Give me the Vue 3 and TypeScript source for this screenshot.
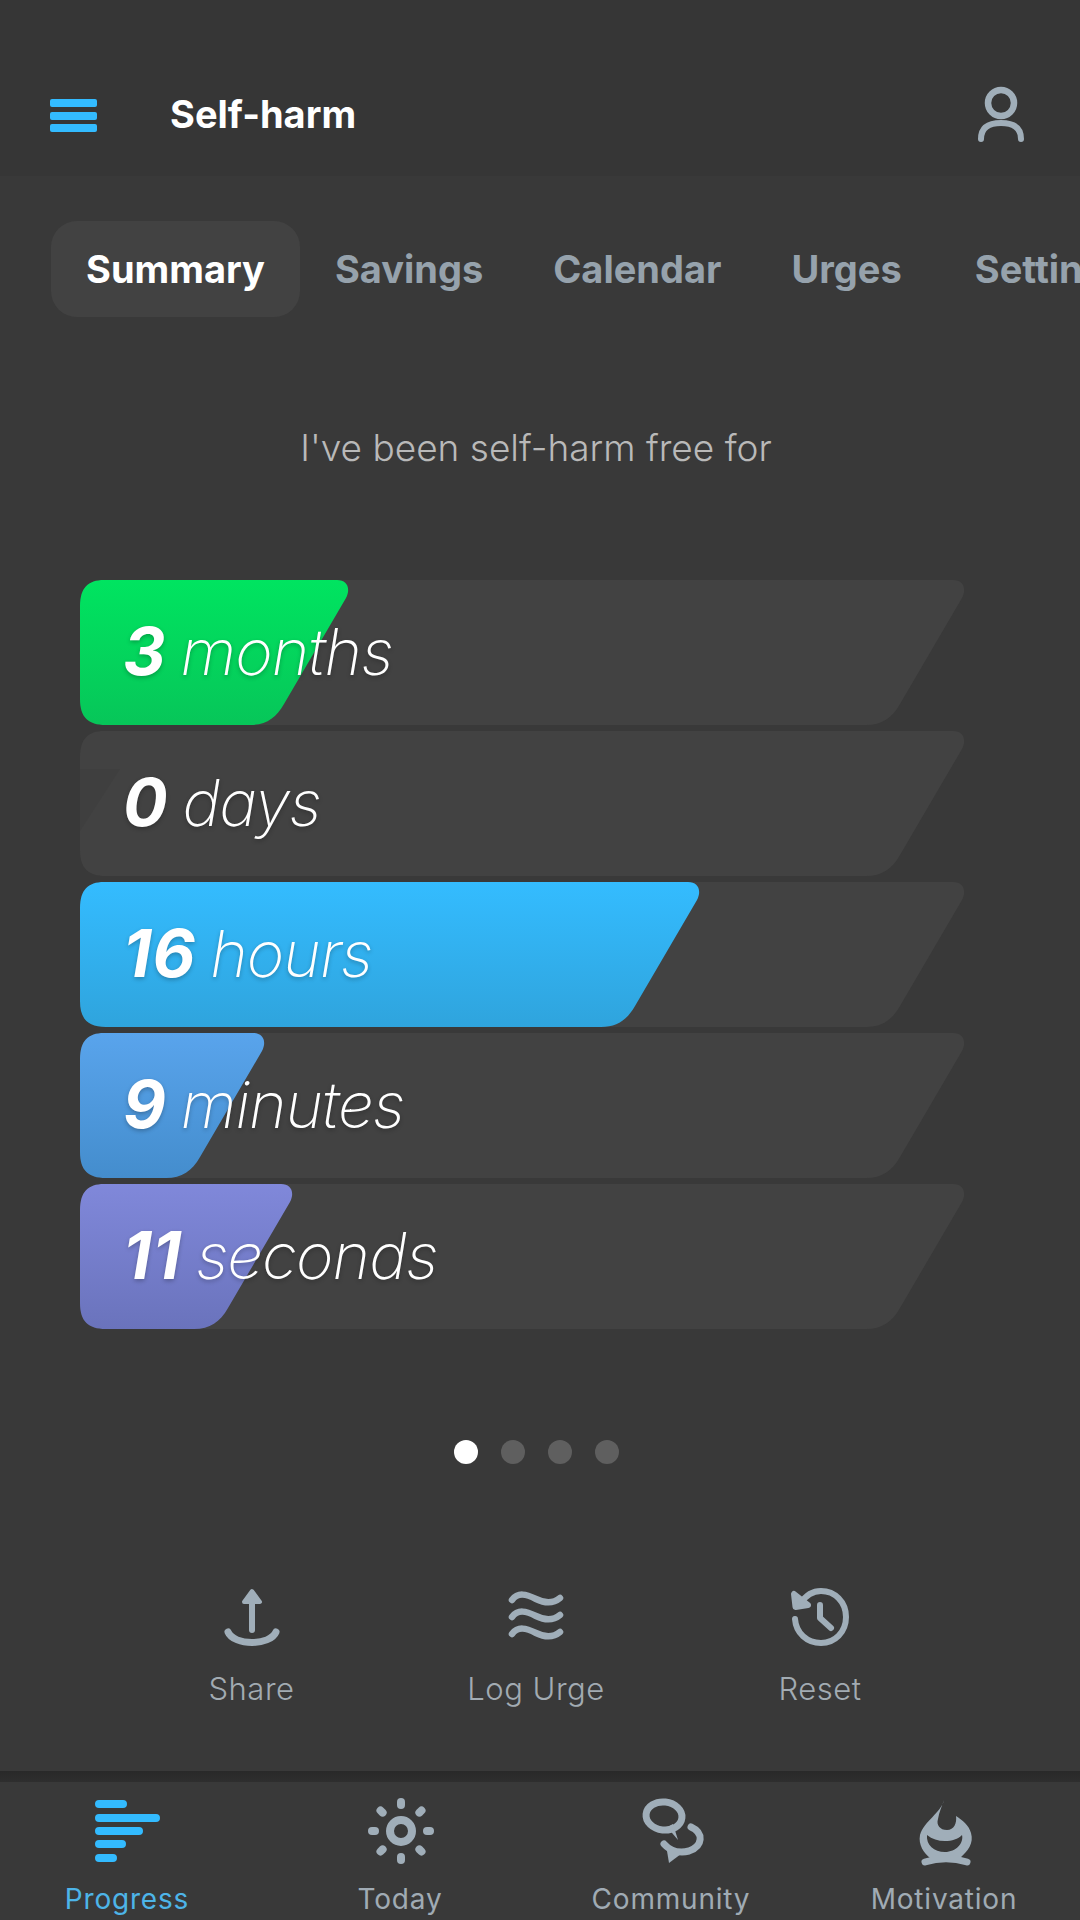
<script setup lang="ts">
type Bar = {
  value: string
  unit: string
  tip: number
  from: string
  to: string
}

const TRACK_TIP = 884

const bars: Bar[] = [
  { value: '3', unit: 'months', tip: 268, from: '#00e460', to: '#07c659' },
  { value: '0', unit: 'days', tip: 0, from: '#424242', to: '#424242' },
  { value: '16', unit: 'hours', tip: 619, from: '#34bcff', to: '#2fa4dd' },
  { value: '9', unit: 'minutes', tip: 184, from: '#59a4ec', to: '#448dcd' },
  { value: '11', unit: 'seconds', tip: 212, from: '#8088da', to: '#6a73bc' }
]

const tabs = ['Summary', 'Savings', 'Calendar', 'Urges', 'Settings']

const slantPath = (w: number) =>
  `M24 0H${w - 11}C${w - 1} 0 ${w + 3} 8 ${w - 2} 18L${w - 64} 124C${w - 72} 138 ${w - 82} 145 ${w - 98} 145H26C8 145 0 137 0 119V26C0 8 8 0 24 0Z`

const sunRays = Array.from({ length: 8 }, (_, i) => i * 45)
</script>

<template>
  <div class="screen">
    <header class="topbar">
      <div class="burger"><span></span><span></span><span></span></div>
      <h1>Self-harm</h1>
      <svg class="user" width="52" height="60" viewBox="0 0 52 60" fill="none" stroke="#a0aeb9">
        <circle cx="26" cy="19" r="13" stroke-width="6.500" />
        <path d="M6 55C6 44 13 39 26 39C39 39 46 44 46 55" stroke-width="6" stroke-linecap="round" />
      </svg>
    </header>

    <nav class="tabs">
      <span v-for="(tab, i) in tabs" :key="tab" class="tab" :class="{ on: i === 0 }">{{ tab }}</span>
    </nav>

    <p class="lead">I've been self-harm free for</p>

    <section class="bars">
      <div v-for="bar in bars" :key="bar.unit" class="bar">
        <svg class="bar-bg" width="890" height="145" viewBox="0 0 890 145">
          <defs>
            <linearGradient :id="`g-${bar.unit}`" x1="0" y1="0" x2="0" y2="1">
              <stop offset="0" :stop-color="bar.from" />
              <stop offset="1" :stop-color="bar.to" />
            </linearGradient>
          </defs>
          <path :d="slantPath(TRACK_TIP)" fill="#424242" />
          <path v-if="bar.tip" :d="slantPath(bar.tip)" :fill="`url(#g-${bar.unit})`" />
          <path v-else d="M0 100L40 38H0Z" fill="#3f3f3f" />
        </svg>
        <span class="bar-text"><b>{{ bar.value }}</b> {{ bar.unit }}</span>
      </div>
    </section>

    <div class="dots">
      <i class="on"></i><i></i><i></i><i></i>
    </div>

    <div class="actions">
      <div class="action">
        <svg width="64" height="60" viewBox="0 0 64 60" fill="none" stroke="#a0aeb9" stroke-width="6" stroke-linecap="round" stroke-linejoin="round">
          <path d="M32 42V10" />
          <path d="M24 14L32 3L40 14Z" fill="#a0aeb9" stroke-width="4" />
          <path d="M8 44C14 58 50 58 56 44" stroke-width="7" />
        </svg>
        <span>Share</span>
      </div>
      <div class="action">
        <svg width="64" height="60" viewBox="0 0 64 60" fill="none" stroke="#a0aeb9" stroke-width="6.500" stroke-linecap="round">
          <path d="M8 12C14 4 22 6 32 11C42 16 50 15 56 10" />
          <path d="M8 29C14 21 22 23 32 28C42 33 50 32 56 27" />
          <path d="M8 46C14 38 22 40 32 45C42 50 50 49 56 44" />
        </svg>
        <span>Log Urge</span>
      </div>
      <div class="action">
        <svg width="64" height="60" viewBox="0 0 64 60" fill="none" stroke="#a0aeb9" stroke-width="6" stroke-linecap="round" stroke-linejoin="round">
          <path d="M13 15C18 7 25 3 33 3C47 3 58 14 58 29C58 44 47 55 33 55C19 55 8 45 7 31" />
          <path d="M6 6L7.500 19L20 17Z" fill="#a0aeb9" />
          <path d="M32 17V30L43 40" />
        </svg>
        <span>Reset</span>
      </div>
    </div>

    <div class="bottom-edge"></div>

    <footer class="tabbar">
      <div class="tabbar-item active">
        <svg width="80" height="72" viewBox="0 0 80 72" fill="none" stroke="#33bbff" stroke-width="8" stroke-linecap="round">
          <path d="M12 7H36M12 21H69M12 34H52M12 47H35M12 61H26" />
        </svg>
        <span>Progress</span>
      </div>
      <div class="tabbar-item">
        <svg width="80" height="72" viewBox="0 0 80 72" fill="none" stroke="#a0aeb9">
          <circle cx="41" cy="34" r="11" stroke-width="8" />
          <path
            v-for="deg in sunRays"
            :key="deg"
            d="M41 5V8"
            stroke-width="8"
            stroke-linecap="round"
            :transform="`rotate(${deg} 41 34)`"
          />
        </svg>
        <span>Today</span>
      </div>
      <div class="tabbar-item">
        <svg width="80" height="72" viewBox="0 0 80 72" fill="none" stroke="#a0aeb9">
          <ellipse cx="33" cy="19" rx="18" ry="14" stroke-width="7" transform="rotate(6 33 19)" />
          <path d="M36 30L47 43L42 27Z" fill="#a0aeb9" stroke="none" />
          <path d="M60 30C73 36 72 49 58 54C50 56 40 55 33 47" stroke-width="7" stroke-linecap="round" />
          <path d="M36 54L38 66L54 54Z" fill="#a0aeb9" stroke="none" />
        </svg>
        <span>Community</span>
      </div>
      <div class="tabbar-item">
        <svg width="80" height="72" viewBox="0 0 80 72" fill="none">
          <path
            fill="#a0aeb9"
            fill-rule="evenodd"
            d="M40 3C37 16 20 24 16 38C14 48 20 56 26 61H56C64 54 70 46 67 36C65 28 58 23 52 19C53 26 50 33 43 33C36 33 32 28 34 22C35 15 38 9 40 3ZM23 38C28 42 34 44 41 44C48 44 54 42 58 38C60 46 52 55 41 55C30 55 22 48 23 38Z"
          />
          <path d="M21 65C34 61 50 61 63 65" stroke="#a0aeb9" stroke-width="7" stroke-linecap="round" />
        </svg>
        <span>Motivation</span>
      </div>
    </footer>
  </div>
</template>

<style>
html,
body {
  margin: 0;
  background: #383838;
}
</style>

<style scoped>
.screen {
  width: 1080px;
  height: 1920px;
  overflow: hidden;
  background: #393939;
  font-family: Inter, "Liberation Sans", sans-serif;
  color: #fff;
}

.topbar {
  height: 176px;
  box-sizing: border-box;
  padding: 84px 53px 0 50px;
  display: flex;
  align-items: flex-start;
  background: #363636;
}

.burger {
  width: 47px;
  margin-top: 15px;
  display: flex;
  flex-direction: column;
  gap: 4.5px;
}

.burger span {
  height: 8px;
  border-radius: 2px;
  background: #33bbff;
}

.topbar h1 {
  margin: 3px 0 0 73px;
  font-size: 38px;
  line-height: 54px;
  font-weight: 700;
  flex: 1;
}

.tabs {
  margin-top: 45px;
  padding-left: 51px;
  display: flex;
  white-space: nowrap;
}

.tab {
  padding: 0 35px;
  height: 96px;
  line-height: 96px;
  font-size: 38px;
  font-weight: 700;
  color: #96a2ac;
  border-radius: 26px;
}

.tab:nth-child(4) {
  padding-right: 38px;
}

.tab.on {
  color: #fff;
  background: #424242;
}

.lead {
  margin: 101px 8px 0 0;
  text-align: center;
  font-size: 37px;
  line-height: 60px;
  font-weight: 300;
  color: #b9b9b9;
}

.bars {
  margin-top: 102px;
  padding-left: 80px;
  display: flex;
  flex-direction: column;
  gap: 6px;
}

.bar {
  position: relative;
  height: 145px;
  display: flex;
  align-items: center;
  padding-left: 43px;
}

.bar-bg {
  position: absolute;
  left: 0;
  top: 0;
}

.bar-text {
  position: relative;
  top: -2px;
  font-size: 64px;
  font-weight: 250;
  font-style: italic;
  letter-spacing: -1px;
  word-spacing: -3px;
  text-shadow: 0 2px 4px rgba(0, 0, 0, 0.25);
}

.bar-text b {
  font-weight: 700;
  font-size: 66px;
  letter-spacing: 1px;
}

.dots {
  margin-top: 111px;
  display: flex;
  justify-content: center;
  gap: 23px;
  transform: translateX(-4px);
}

.dots i {
  width: 24px;
  height: 24px;
  border-radius: 50%;
  background: #5f5f5f;
}

.dots i.on {
  background: #fff;
}

.actions {
  margin-top: 124px;
  display: grid;
  grid-template-columns: 285px 284px 284px;
  padding-left: 109px;
}

.action {
  display: flex;
  flex-direction: column;
  align-items: center;
}

.action span {
  margin-top: 19px;
  font-size: 31px;
  line-height: 44px;
  font-weight: 300;
  letter-spacing: 0.5px;
  color: #a2abb2;
}

.bottom-edge {
  margin-top: 60px;
  height: 11px;
  background: linear-gradient(#292929, #2e2e2e);
}

.tabbar {
  padding-top: 15px;
  display: grid;
  grid-template-columns: 254px 292px 250px 284px;
  background: #393939;
}

.tabbar-item {
  display: flex;
  flex-direction: column;
  align-items: center;
}

.tabbar-item:last-child {
  margin-right: -12px;
}

.tabbar-item span {
  margin-top: 10px;
  font-size: 28px;
  line-height: 40px;
  letter-spacing: 0.8px;
  color: #a0abb4;
}

.tabbar-item.active span {
  color: #4db4e8;
}
</style>
